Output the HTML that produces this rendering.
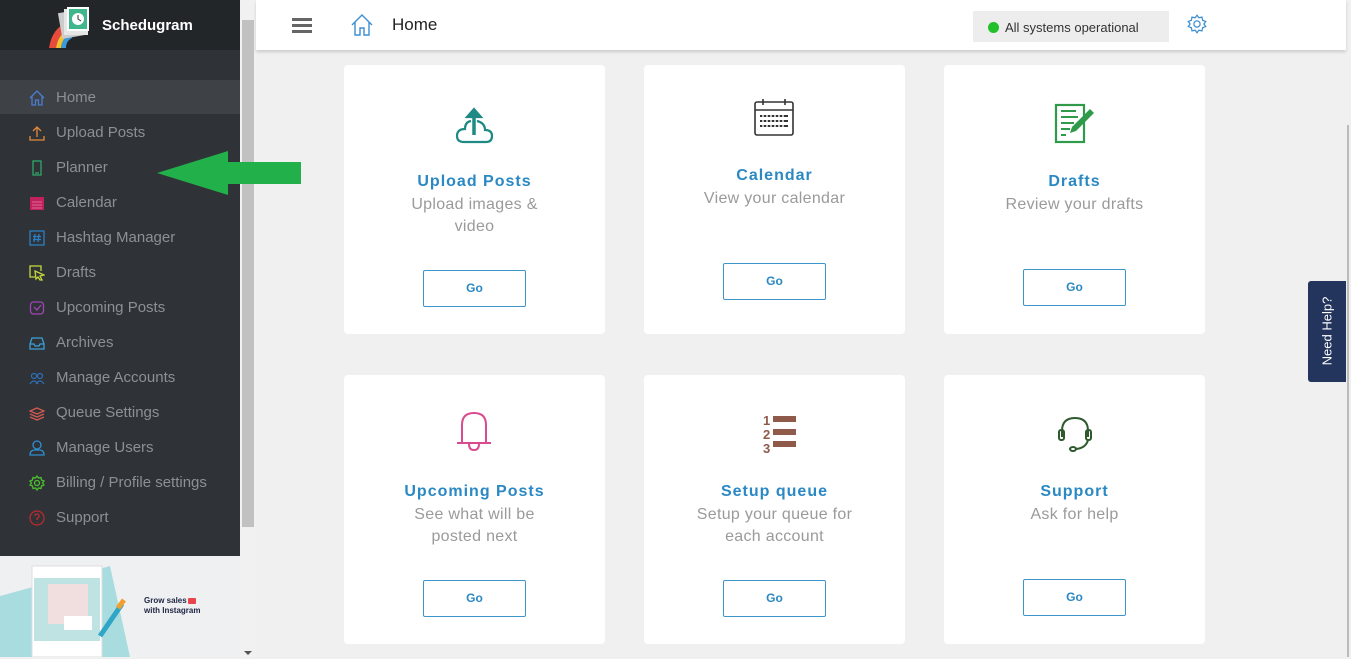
<!DOCTYPE html>
<html><head><meta charset="utf-8"><style>
*{margin:0;padding:0;box-sizing:border-box}
body{width:1351px;height:657px;overflow:hidden;background:#f0f0f0;font-family:"Liberation Sans",sans-serif;position:relative}
.sb{position:absolute;left:0;top:0;width:240px;height:557px;background:#2f3338}
.logo{position:absolute;left:0;top:0;width:240px;height:50px;background:#232629}
.logo span{position:absolute;left:102px;top:17px;color:#fff;font-size:15px;font-weight:bold}
.item{position:absolute;left:0;width:240px;height:34px;color:#8c9095;font-size:15px;line-height:36px;padding-left:56px}
.item svg{position:absolute;left:29px;top:10px}
.sbar{position:absolute;left:240px;top:0;width:16px;height:657px;background:#f1f1f1}
.thumb{position:absolute;left:242px;top:20px;width:12px;height:507px;background:#c1c1c1}
.promo{position:absolute;left:0;top:556px;width:240px;height:101px;background:#eef0f2;overflow:hidden}
.hdr{position:absolute;left:256px;top:0;width:1090px;height:50px;background:#fff;box-shadow:0 2px 3px rgba(0,0,0,.15)}
.card{position:absolute;width:261px;height:269px;background:#fff;border-radius:4px;text-align:center}
.card h3{position:absolute;left:0;right:0;font-size:16px;color:#2a88c3;letter-spacing:1px}
.card p{position:absolute;left:0;right:0;font-size:16px;color:#9a9a9a;line-height:22px;letter-spacing:.3px}
.go{position:absolute;left:79px;width:103px;height:37px;border:1px solid #3d96c8;border-radius:2px;color:#2a88c3;font-size:12px;font-weight:bold;line-height:35px}
.ic{position:absolute;left:110px}
</style></head><body>
<div class="sb">
 <div class="logo">
  <svg width="50" height="46" style="position:absolute;left:48px;top:4px">
   <path d="M1 44 Q4 24 20 18 L22 24 Q10 30 8 44Z" fill="#e84a3c"/>
   <path d="M8 44 Q10 30 22 24 L23 29 Q14 34 13 44Z" fill="#f2c230"/>
   <path d="M13 44 Q14 34 23 29 L24 34 Q18 37 18 44Z" fill="#3a9ad9"/>
   <rect x="12" y="7" width="24" height="26" fill="#ccc" transform="rotate(-10 24 20)"/>
   <rect x="16" y="5" width="24" height="26" fill="#e6e6e6"/>
   <rect x="19" y="3" width="22" height="24" fill="#fff"/>
   <rect x="21" y="5" width="18" height="20" fill="#3fb68b"/>
   <circle cx="30" cy="15" r="6" fill="#fff"/>
   <path d="M30 11 V15 L33 17" stroke="#333" stroke-width="1" fill="none"/>
  </svg>
  <span>Schedugram</span>
 </div>
 <div class="item" style="top:80px;background:#3e4247">
  <svg width="16" height="16" viewBox="0 0 16 16" fill="none" stroke="#4a7ed0" stroke-width="1.3"><path d="M1 8 L8 1 L15 8 M3 6 V15 H6.5 V10 H9.5 V15 H13 V6"/></svg>Home</div>
 <div class="item" style="top:115px"><svg width="16" height="16" viewBox="0 0 16 16" fill="none" stroke="#e28a3c" stroke-width="1.3"><path d="M8 12 V2 M4 6 L8 2 L12 6 M1 11 V15 H15 V11"/></svg>Upload Posts</div>
 <div class="item" style="top:150px"><svg width="16" height="16" viewBox="0 0 16 16" fill="none" stroke="#2fa86a" stroke-width="1.3"><rect x="4" y="1" width="8" height="14"/><path d="M6 13 H10"/></svg>Planner</div>
 <div class="item" style="top:185px"><svg width="16" height="16" viewBox="0 0 16 16"><rect x="1" y="2" width="14" height="13" fill="#c2215f"/><path d="M3 7 H13 M3 10 H13 M3 13 H13" stroke="#e06b95" stroke-width="1"/></svg>Calendar</div>
 <div class="item" style="top:220px"><svg width="16" height="16" viewBox="0 0 16 16" fill="none" stroke="#2a7fc4" stroke-width="1.3"><rect x="1" y="1" width="14" height="14"/><path d="M6 4 L5 12 M10 4 L9 12 M4 6.5 H12 M4 9.5 H12"/></svg>Hashtag Manager</div>
 <div class="item" style="top:255px"><svg width="16" height="16" viewBox="0 0 16 16" fill="none" stroke="#c6d93a" stroke-width="1.3"><path d="M12 6 V1 H1 V12 H6"/><path d="M6 6 L15 10 L11 11 L13 15 L11 15 L9 12 L7 14Z"/></svg>Drafts</div>
 <div class="item" style="top:290px"><svg width="16" height="16" viewBox="0 0 16 16" fill="none" stroke="#a045b4" stroke-width="1.3"><rect x="1.5" y="2" width="13" height="12" rx="3"/><path d="M5 7 L8 10 L12 5"/></svg>Upcoming Posts</div>
 <div class="item" style="top:325px"><svg width="16" height="16" viewBox="0 0 16 16" fill="none" stroke="#3aa0d4" stroke-width="1.3"><path d="M1 9 L3 3 H13 L15 9 V14 H1Z M1 9 H5 L6 11 H10 L11 9 H15"/></svg>Archives</div>
 <div class="item" style="top:360px"><svg width="16" height="16" viewBox="0 0 16 16" fill="none" stroke="#2f6fb8" stroke-width="1.2"><circle cx="5" cy="6" r="2.5"/><circle cx="11" cy="6" r="2.5"/><path d="M1 14 Q5 8 9 14 M7 14 Q11 8 15 14"/></svg>Manage Accounts</div>
 <div class="item" style="top:395px"><svg width="16" height="16" viewBox="0 0 16 16" fill="none" stroke="#d05a4e" stroke-width="1.3"><path d="M1 6 L8 3 L15 6 L8 9Z M1 9 L8 12 L15 9 M1 12 L8 15 L15 12"/></svg>Queue Settings</div>
 <div class="item" style="top:430px"><svg width="16" height="16" viewBox="0 0 16 16" fill="none" stroke="#2f8ed0" stroke-width="1.3"><circle cx="8" cy="5" r="4"/><path d="M1 15 Q1 10 6 10 H10 Q15 10 15 15Z"/></svg>Manage Users</div>
 <div class="item" style="top:465px"><svg width="16" height="16" viewBox="0 0 16 16" fill="none" stroke="#4cc02e" stroke-width="1.3"><circle cx="8" cy="8" r="2.5"/><path d="M8 1 L9.5 3 L12 2.5 L12.5 5 L15 6 L13.5 8 L15 10 L12.5 11 L12 13.5 L9.5 13 L8 15 L6.5 13 L4 13.5 L3.5 11 L1 10 L2.5 8 L1 6 L3.5 5 L4 2.5 L6.5 3Z"/></svg>Billing / Profile settings</div>
 <div class="item" style="top:500px"><svg width="16" height="16" viewBox="0 0 16 16" fill="none" stroke="#b82b2f" stroke-width="1.3"><circle cx="8" cy="8" r="7"/><path d="M6 6 Q6 4 8 4 Q10 4 10 6 Q10 7.5 8 8.5 V10 M8 12 V12.5"/></svg>Support</div>
</div>
<div class="promo">
 <svg width="240" height="101" style="position:absolute;left:0;top:0">
  <path d="M0 40 L110 10 L130 101 L0 101Z" fill="#a9dcde"/>
  <rect x="32" y="10" width="70" height="91" fill="#fff" stroke="#ddd"/>
  <rect x="34" y="22" width="66" height="63" fill="#bfe3e3"/>
  <rect x="48" y="28" width="40" height="40" fill="#f1dede"/>
  <rect x="64" y="60" width="28" height="14" fill="#fff"/>
  <path d="M100 80 L122 48" stroke="#2fa6c6" stroke-width="5"/>
  <path d="M118 52 L124 44" stroke="#f0a030" stroke-width="5"/>
  <rect x="188" y="42" width="8" height="6" fill="#e8454f" rx="1"/>
 </svg>
 <div style="position:absolute;left:144px;top:40px;font-size:8px;font-weight:bold;color:#222845;line-height:10px">Grow sales<br>with Instagram</div>
</div>
<div class="sbar"></div><div class="thumb"></div>
<div style="position:absolute;left:244px;top:651px;border:4px solid transparent;border-top:4px solid #555"></div>
<div style="position:absolute;left:1347px;top:125px;width:2px;height:532px;background:#bbb"></div>

<div class="hdr">
 <div style="position:absolute;left:36px;top:18px;width:20px;height:3px;background:#666;box-shadow:0 6px 0 #666,0 12px 0 #666"></div>
 <svg width="22" height="22" viewBox="0 0 22 22" style="position:absolute;left:95px;top:14px" fill="none" stroke="#3d8fd0" stroke-width="1.4"><path d="M1 11 L11 1 L21 11 M4 8 V21 H9 V14 H13 V21 H18 V8"/></svg>
 <div style="position:absolute;left:136px;top:15px;font-size:17px;color:#222">Home</div>
 <div style="position:absolute;left:717px;top:11px;width:196px;height:31px;background:#ededed;font-size:13px;color:#333;line-height:33px;padding-left:32px">All systems operational
  <div style="position:absolute;left:15px;top:11px;width:11px;height:11px;border-radius:50%;background:#22c02a"></div></div>
 <svg width="20" height="20" viewBox="0 0 16 16" style="position:absolute;left:931px;top:14px" fill="none" stroke="#3d8fd0" stroke-width="1"><circle cx="8" cy="8" r="2.5"/><path d="M8 1 L9.5 3 L12 2.5 L12.5 5 L15 6 L13.5 8 L15 10 L12.5 11 L12 13.5 L9.5 13 L8 15 L6.5 13 L4 13.5 L3.5 11 L1 10 L2.5 8 L1 6 L3.5 5 L4 2.5 L6.5 3Z"/></svg>
</div>

<svg width="150" height="50" style="position:absolute;left:155px;top:149px"><path d="M2 24 L73 2 L73 13 L146 13 L146 35 L73 35 L73 46Z" fill="#22b04b"/></svg>

<div class="card" style="left:344px;top:65px">
 <svg class="ic" width="40" height="42" viewBox="0 0 40 42" style="top:40px" fill="none" stroke="#1f8a83" stroke-width="2.2"><path d="M17 16 Q11 17 11 24 Q3 24 3 31 Q3 37 10 37 H32 Q38 37 38 31 Q38 25 31 25 Q31 18 23 16"/><path d="M20 6 V30" stroke-width="3.5"/><path d="M13 12 L20 4 L27 12Z" fill="#1f8a83"/></svg>
 <h3 style="top:108px">Upload Posts</h3>
 <p style="top:129px">Upload images &amp;<br>video</p>
 <div class="go" style="top:205px">Go</div>
</div>
<div class="card" style="left:644px;top:65px">
 <svg class="ic" width="40" height="38" viewBox="0 0 40 38" style="top:34px"><rect x="1" y="3" width="38" height="33" rx="2" fill="none" stroke="#333" stroke-width="1.6"/><path d="M1 11 H39 M9 0 V6 M31 0 V6" stroke="#333" stroke-width="1.6"/><g fill="#333"><rect x="6" y="16" width="28" height="2"/><rect x="6" y="21" width="28" height="2"/><rect x="6" y="26" width="28" height="2"/></g><path d="M9 15 V29 M13 15 V29 M17 15 V29 M21 15 V29 M25 15 V29 M29 15 V29" stroke="#fff" stroke-width="1.4"/></svg>
 <h3 style="top:102px">Calendar</h3>
 <p style="top:123px">View your calendar</p>
 <div class="go" style="top:198px">Go</div>
</div>
<div class="card" style="left:944px;top:65px">
 <svg class="ic" width="42" height="42" viewBox="0 0 42 42" style="top:37px"><rect x="2" y="3" width="28" height="37" fill="none" stroke="#2f9a4a" stroke-width="2.2"/><path d="M7 9 H22 M7 15 H24 M7 21 H20 M7 27 H16 M7 33 H12" stroke="#2f9a4a" stroke-width="2"/><path d="M36 7 L40 11 L22 29 L16 31 L18 25Z" fill="#2f9a4a"/></svg>
 <h3 style="top:108px">Drafts</h3>
 <p style="top:129px">Review your drafts</p>
 <div class="go" style="top:204px">Go</div>
</div>
<div class="card" style="left:344px;top:375px">
 <svg class="ic" width="40" height="44" viewBox="0 0 40 44" style="top:34px" fill="none" stroke="#d94b8e" stroke-width="2"><path d="M8 34 V16 Q8 4 20 4 Q32 4 32 16 V34 Z M3 34 H37 M15 35 Q15 41 20 41 Q25 41 25 35"/></svg>
 <h3 style="top:108px">Upcoming Posts</h3>
 <p style="top:129px">See what will be<br>posted next</p>
 <div class="go" style="top:205px">Go</div>
</div>
<div class="card" style="left:644px;top:375px">
 <svg class="ic" width="44" height="44" viewBox="0 0 44 44" style="top:36px"><g fill="#8f5a4a" font-family="Liberation Sans" font-weight="bold" font-size="13"><text x="9" y="14">1</text><text x="9" y="28">2</text><text x="9" y="42">3</text></g><g fill="#8f5a4a"><rect x="19" y="5" width="23" height="6"/><rect x="19" y="18" width="23" height="6"/><rect x="19" y="30" width="23" height="6"/></g></svg>
 <h3 style="top:108px">Setup queue</h3>
 <p style="top:129px">Setup your queue for<br>each account</p>
 <div class="go" style="top:205px">Go</div>
</div>
<div class="card" style="left:944px;top:375px">
 <svg class="ic" width="42" height="42" viewBox="0 0 42 42" style="top:38px" fill="none" stroke="#2e5a2e" stroke-width="2"><path d="M8 24 V18 Q8 5 21 5 Q34 5 34 18 V24"/><rect x="5" y="17" width="5" height="10" rx="2"/><rect x="32" y="17" width="5" height="10" rx="2"/><path d="M34 27 Q32 35 22 36"/><ellipse cx="19" cy="36" rx="3" ry="2"/></svg>
 <h3 style="top:108px">Support</h3>
 <p style="top:129px">Ask for help</p>
 <div class="go" style="top:204px">Go</div>
</div>

<div style="position:absolute;left:1308px;top:281px;width:38px;height:101px;background:#23355d;border-radius:3px 0 0 3px">
 <div style="position:absolute;left:19px;top:50px;transform:translate(-50%,-50%) rotate(-90deg);color:#fff;font-size:13px;white-space:nowrap">Need Help?</div>
</div>
</body></html>
